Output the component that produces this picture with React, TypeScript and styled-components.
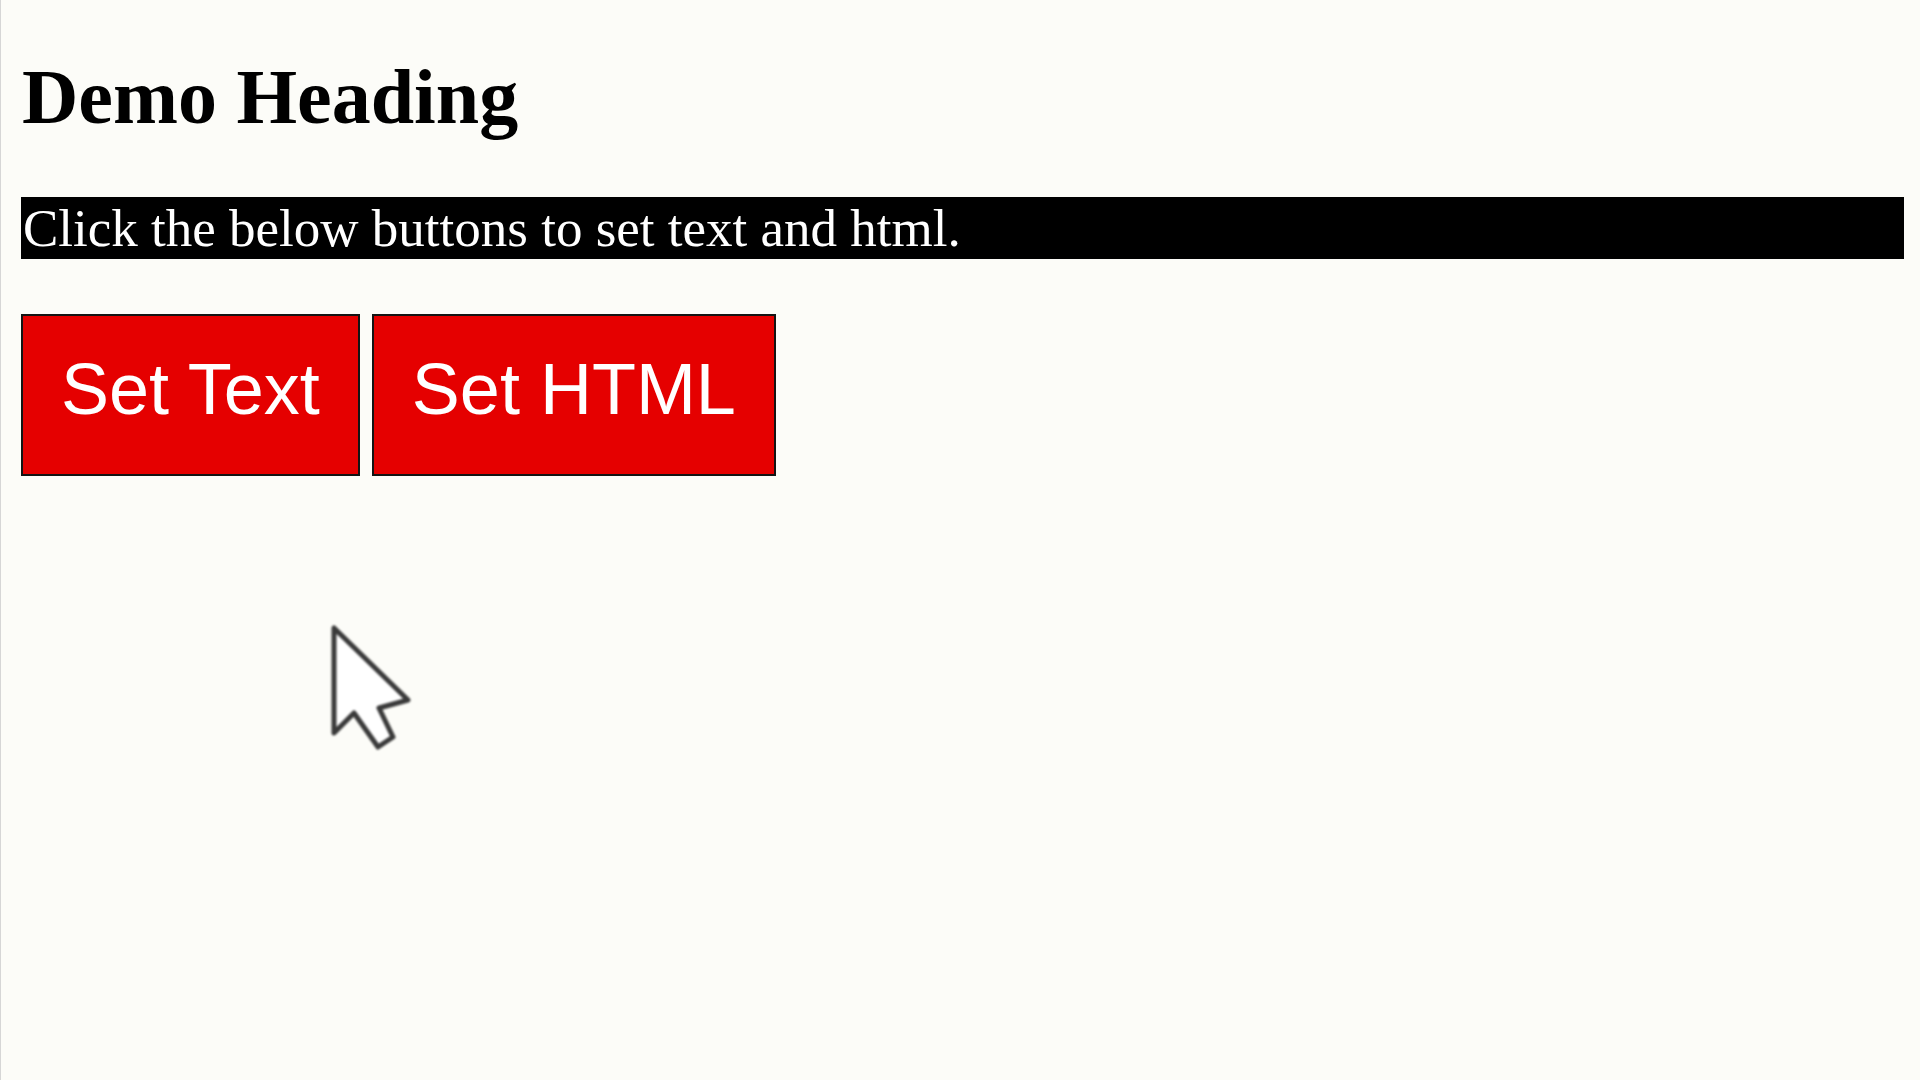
import React from 'react'
import styled, { createGlobalStyle } from 'styled-components'

const GlobalStyle = createGlobalStyle`
  html, body {
    margin: 0;
    padding: 0;
    background: #fcfcf8;
  }
`

const App: React.FC = () => {
  return (
    <>
      <GlobalStyle />
      <Page>
        <Heading>Demo Heading</Heading>
        <Message>Click the below buttons to set text and html.</Message>
        <ButtonRow>
          <ActionButton>Set Text</ActionButton>
          <ActionButton>Set HTML</ActionButton>
        </ButtonRow>
        <Pointer width="82" height="128" viewBox="-4 -4 82 128">
          <path
            d="M0 0 L0 105 L20 85 L44 119 L59 109 L45 80 L74 72 Z"
            fill="#ffffff"
            stroke="#3a3a3a"
            strokeWidth="5"
            strokeLinejoin="round"
          />
        </Pointer>
      </Page>
    </>
  )
}

export default App

const Page = styled.div`
  position: relative;
  box-sizing: border-box;
  min-height: 1080px;
  padding: 58px 16px 0 20px;
  border-left: 1px solid #d6d6d6;
  font-family: 'Liberation Serif', 'Times New Roman', serif;
  color: #000;
`

const Heading = styled.h1`
  margin: 0 0 0 1px;
  font-size: 78px;
  line-height: 1;
  font-weight: bold;
`

const Message = styled.p`
  margin: 61px 0 0;
  padding-left: 2px;
  background: #000;
  color: #fff;
  font-size: 53px;
  line-height: 62px;
`

const ButtonRow = styled.div`
  display: flex;
  gap: 12px;
  margin-top: 55px;
`

const ActionButton = styled.button`
  box-sizing: border-box;
  height: 162px;
  padding: 0 38px 12px;
  background: #e50000;
  border: 2px solid #141414;
  border-radius: 0;
  color: #fff;
  font-family: 'Liberation Sans', Arial, sans-serif;
  font-size: 72px;
  line-height: 1;
`

const Pointer = styled.svg`
  position: absolute;
  left: 329px;
  top: 624px;
  filter: blur(0.8px);
`
